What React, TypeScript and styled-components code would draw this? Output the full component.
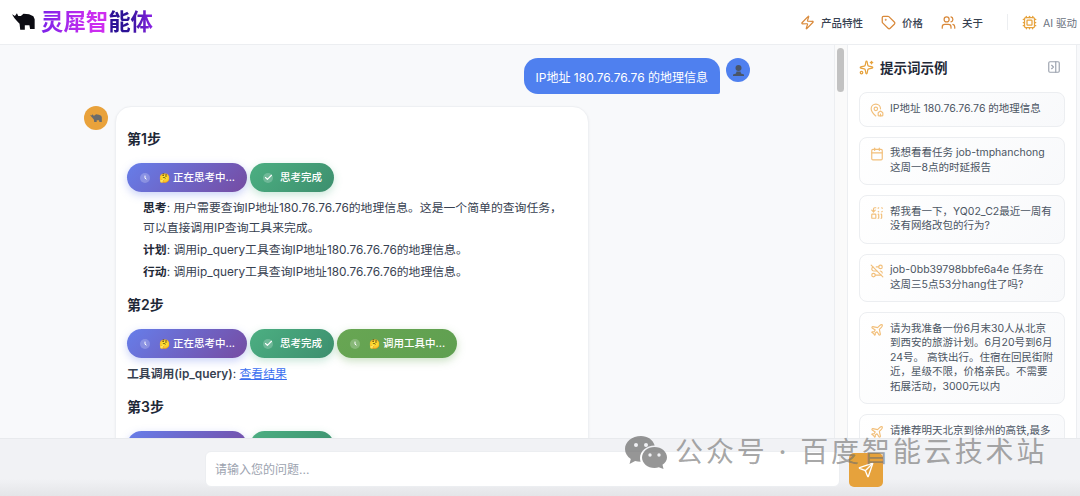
import { Calendar, Check, Cpu, MapPinHouse, PanelRightClose, Plane, ReplaceAll, RouteOff, Send, Sparkles, Tag, Users, Zap } from 'lucide-react'
import type { ReactNode } from 'react'
import styled, { createGlobalStyle } from 'styled-components'

const prompts: { icon: ReactNode; text: string }[] = [
  { icon: <MapPinHouse size={14} />, text: 'IP地址 180.76.76.76 的地理信息' },
  { icon: <Calendar size={14} />, text: '我想看看任务 job-tmphanchong 这周一8点的时延报告' },
  { icon: <ReplaceAll size={14} />, text: '帮我看一下，YQ02_C2最近一周有没有网络改包的行为?' },
  { icon: <RouteOff size={14} />, text: 'job-0bb39798bbfe6a4e 任务在这周三5点53分hang住了吗?' },
  { icon: <Plane size={14} />, text: '请为我准备一份6月末30人从北京到西安的旅游计划。6月20号到6月24号。 高铁出行。住宿在回民街附近，星级不限，价格亲民。不需要拓展活动，3000元以内' },
  { icon: <Plane size={14} />, text: '请推荐明天北京到徐州的高铁,最多不超过两个选项' },
]

const GlobalStyle = createGlobalStyle`
  html, body {
    margin: 0;
    height: 100%;
    overflow: hidden;
  }
  body {
    font-family: Inter, "Noto Sans CJK SC", sans-serif;
    color: #1f2937;
    background: #f8f9fb;
  }
`

const Page = styled.div`
  position: relative;
  display: flex;
  flex-direction: column;
  height: 496px;
  overflow: hidden;
`

const Header = styled.header`
  display: flex;
  flex: none;
  align-items: center;
  justify-content: space-between;
  height: 44px;
  padding: 0 3px 0 12px;
  background: #fff;
  border-bottom: 1px solid #eceef1;
`

const Brand = styled.div`
  display: flex;
  align-items: center;
  gap: 6px;
`

const BrandName = styled.span`
  font-size: 22.4px;
  font-weight: 700;
  line-height: 30px;
  background: linear-gradient(90deg, #7b22e8 0%, #c82cf0 42%, #d02ef0 58%, #2c1296 63%, #2c1296 78%, #8d22e6 100%);
  -webkit-background-clip: text;
  background-clip: text;
  color: transparent;
`

const Nav = styled.nav`
  display: flex;
  align-items: center;
  font-size: 10.5px;
  color: #374151;
`

const NavItem = styled.span`
  display: flex;
  align-items: center;
  gap: 6px;
  margin-left: 18px;
  font-weight: 500;
  svg {
    color: #d9893a;
  }
`

const NavNote = styled(NavItem)`
  margin-left: 24px;
  padding-left: 14px;
  border-left: 1px solid #eceef1;
  height: 16px;
  font-weight: 400;
  color: #6b7280;
  svg {
    color: #e6a23c;
  }
`

const Body = styled.main`
  display: flex;
  flex: 1;
  min-height: 0;
`

const Chat = styled.section`
  flex: 1;
  min-width: 0;
  padding: 13px 0 0 84px;
  overflow: hidden;
`

const UserRow = styled.div`
  display: flex;
  justify-content: flex-end;
  align-items: flex-start;
  gap: 6px;
  padding-right: 84px;
  margin-bottom: 12px;
`

const UserBubble = styled.div`
  display: flex;
  align-items: center;
  height: 36px;
  padding: 0 12px;
  background: #4f80ef;
  color: #fff;
  font-size: 12px;
  border-radius: 14px 14px 2px 14px;
`

const Avatar = styled.div<{ $bg: string }>`
  display: flex;
  flex: none;
  align-items: center;
  justify-content: center;
  width: 24px;
  height: 24px;
  border-radius: 50%;
  background: ${p => p.$bg};
`

const BotRow = styled.div`
  display: flex;
  align-items: flex-start;
  gap: 7px;
`

const BotBubble = styled.article`
  box-sizing: border-box;
  width: 474px;
  padding: 22px 12px 0 11px;
  background: #fff;
  border: 1px solid #eef0f3;
  border-radius: 16px 16px 0 0;
  box-shadow: 0 1px 3px rgba(0, 0, 0, 0.05);
  font-size: 11.85px;
  line-height: 19.5px;
`

const StepTitle = styled.h3`
  margin: 0 0 14px;
  font-size: 14px;
  font-weight: 600;
  line-height: 20px;
`

const Badges = styled.div`
  display: flex;
  gap: 3px;
  margin-bottom: 7px;
`

const Badge = styled.span<{ $tone: 'purple' | 'teal' | 'green' }>`
  display: flex;
  align-items: center;
  height: 29px;
  padding: 0 12px 0 13px;
  border-radius: 15px;
  color: #fff;
  font-size: 10.5px;
  font-weight: 500;
  white-space: nowrap;
  background: ${p =>
    p.$tone === 'purple'
      ? 'linear-gradient(135deg, #667eea, #764ba2)'
      : p.$tone === 'teal'
        ? 'linear-gradient(135deg, #4caf82, #3d8f6e)'
        : 'linear-gradient(135deg, #68a653, #5f9f50)'};
  box-shadow: 0 3px 8px
    ${p =>
      p.$tone === 'purple'
        ? 'rgba(102, 126, 234, 0.35)'
        : p.$tone === 'teal'
          ? 'rgba(76, 175, 130, 0.3)'
          : 'rgba(104, 166, 83, 0.35)'};
`

const BadgeIcon = styled.span`
  display: flex;
  align-items: center;
  justify-content: center;
  width: 10px;
  height: 10px;
  margin-right: 7px;
  border-radius: 50%;
  background: rgba(255, 255, 255, 0.22);
`

const Emoji = styled.span`
  margin: 0 3px 0 2px;
  font-size: 9px;
`

const Thought = styled.div`
  margin-bottom: 13px;
  padding: 0 12px 0 16px;
`

const ThoughtLine = styled.p`
  margin: 0 0 2.5px;
  color: #374151;
  strong {
    color: #1f2937;
    font-weight: 600;
  }
`

const ToolLine = styled.p`
  margin: 0;
  color: #374151;
  strong {
    font-weight: 600;
  }
  a {
    color: #3b6ff0;
  }
`

const StepBlock = styled.div`
  margin-bottom: 12.5px;
`

const ScrollTrack = styled.div`
  flex: none;
  box-sizing: border-box;
  width: 13px;
  padding: 3px 2px 0;
  background: #fafafa;
  border-left: 1px solid #eceef1;
`

const ScrollThumb = styled.div`
  width: 7px;
  height: 44px;
  border-radius: 3.5px;
  background: #c2c2c2;
`

const Sidebar = styled.aside`
  flex: none;
  width: 230px;
  margin-right: 3px;
  padding: 12px 11px 0;
  background: #fff;
  border-left: 1px solid #eceef1;
  border-right: 1px solid #eceef1;
  box-sizing: border-box;
  overflow: hidden;
`

const SideHead = styled.div`
  display: flex;
  align-items: center;
  justify-content: space-between;
  height: 20px;
  margin-bottom: 15px;
  padding-right: 4px;
  color: #9ca3af;
`

const SideTitle = styled.h2`
  display: flex;
  align-items: center;
  gap: 6px;
  margin: 0;
  font-size: 13.5px;
  font-weight: 600;
  color: #1f2937;
  svg {
    color: #e6a23c;
  }
`

const PromptCard = styled.div`
  display: flex;
  gap: 6px;
  margin-bottom: 10px;
  padding: 8.75px 10px;
  background: linear-gradient(135deg, #fff, #f8f9fb);
  border: 1px solid #eceef1;
  border-radius: 8px;
  font-size: 10.5px;
  line-height: 14.5px;
  color: #4b5563;
  svg {
    flex: none;
    color: #f2bf7a;
    margin-top: 1px;
  }
`

const Footer = styled.footer`
  position: absolute;
  left: 0;
  right: 0;
  bottom: 0;
  display: flex;
  align-items: flex-end;
  gap: 9px;
  height: 58px;
  padding: 0 197px 9px 205px;
  box-sizing: border-box;
  background: linear-gradient(180deg, #f1f2f5 0%, #f1f2f5 70%, #e4e5e8 100%);
  border-top: 1px solid #e8eaed;
`

const Input = styled.input`
  flex: 1;
  min-width: 0;
  height: 36px;
  padding: 0 9px;
  box-sizing: border-box;
  border: 1px solid #eceef1;
  border-radius: 6px;
  background: #fff;
  font: inherit;
  font-size: 12px;
  &::placeholder {
    color: #9ca3af;
  }
`

const SendButton = styled.button`
  display: flex;
  flex: none;
  align-items: center;
  justify-content: center;
  width: 34px;
  height: 34px;
  padding: 0;
  border: 0;
  border-radius: 5px;
  background: #e6a23c;
  color: #fff;
`

const Watermark = styled.div`
  position: absolute;
  left: 625px;
  top: 433px;
  display: flex;
  align-items: center;
  gap: 8px;
  font-size: 28px;
  line-height: 38px;
  letter-spacing: 2.9px;
  color: rgba(110, 110, 110, 0.62);
  white-space: nowrap;
  pointer-events: none;
`

const Rhino = ({ width, color }: { width: number; color: string }) => (
  <svg width={width} height={(width * 52) / 70} viewBox="33 43 70 52" fill={color}>
    <path d="M33 47 L42 52 L48 44 L52 52 L60 52 L68 45 L85 47 L98 53 L102 62 L102 92 L88 92 L86 80 L72 80 L72 94 L58 94 L56 76 L48 67 L40 58 Z" />
  </svg>
)

const Bust = () => (
  <svg width="13" height="13" viewBox="0 0 13 13" fill="#4a5568">
    <circle cx="6.5" cy="4" r="3" />
    <path d="M4.500 7.500h4l.5 2 3 1v1.500H1V10.500l3-1z" />
  </svg>
)

const ClockHands = () => (
  <svg width="10" height="10" viewBox="0 0 10 10" fill="none" stroke="#fff" strokeWidth="1" strokeLinecap="round">
    <path d="M5 3v2.200l1.200.8" />
  </svg>
)

const Step = ({ title, extra, children }: { title: string; extra?: boolean; children?: ReactNode }) => (
  <StepBlock>
    <StepTitle>{title}</StepTitle>
    <Badges>
      <Badge $tone="purple">
        <BadgeIcon><ClockHands /></BadgeIcon>
        <Emoji>🤔</Emoji>正在思考中...
      </Badge>
      <Badge $tone="teal">
        <BadgeIcon><Check size={9} strokeWidth={3} /></BadgeIcon>思考完成
      </Badge>
      {extra && (
        <Badge $tone="green">
          <BadgeIcon><ClockHands /></BadgeIcon>
          <Emoji>🤔</Emoji>调用工具中...
        </Badge>
      )}
    </Badges>
    {children}
  </StepBlock>
)

const App = () => {
  return (
    <Page>
      <GlobalStyle />
      <Header>
        <Brand>
          <Rhino width={23} color="#0b0b12" />
          <BrandName>灵犀智能体</BrandName>
        </Brand>
        <Nav>
          <NavItem><Zap size={15} />产品特性</NavItem>
          <NavItem><Tag size={15} />价格</NavItem>
          <NavItem><Users size={15} />关于</NavItem>
          <NavNote><Cpu size={15} />AI 驱动</NavNote>
        </Nav>
      </Header>
      <Body>
        <Chat>
          <UserRow>
            <UserBubble>IP地址 180.76.76.76 的地理信息</UserBubble>
            <Avatar $bg="#4f80ef">
              <Bust />
            </Avatar>
          </UserRow>
          <BotRow>
            <Avatar $bg="#e9a23b">
              <Rhino width={12} color="#6b6b6b" />
            </Avatar>
            <BotBubble>
              <Step title="第1步">
                <Thought>
                  <ThoughtLine><strong>思考</strong>: 用户需要查询IP地址180.76.76.76的地理信息。这是一个简单的查询任务，可以直接调用IP查询工具来完成。</ThoughtLine>
                  <ThoughtLine><strong>计划</strong>: 调用ip_query工具查询IP地址180.76.76.76的地理信息。</ThoughtLine>
                  <ThoughtLine><strong>行动</strong>: 调用ip_query工具查询IP地址180.76.76.76的地理信息。</ThoughtLine>
                </Thought>
              </Step>
              <Step title="第2步" extra>
                <ToolLine><strong>工具调用(ip_query)</strong>: <a href="#result">查看结果</a></ToolLine>
              </Step>
              <Step title="第3步" />
            </BotBubble>
          </BotRow>
        </Chat>
        <ScrollTrack>
          <ScrollThumb />
        </ScrollTrack>
        <Sidebar>
          <SideHead>
            <SideTitle><Sparkles size={15} />提示词示例</SideTitle>
            <PanelRightClose size={14} />
          </SideHead>
          {prompts.map((item, index) => (
            <PromptCard key={index}>
              {item.icon}
              <span>{item.text}</span>
            </PromptCard>
          ))}
        </Sidebar>
      </Body>
      <Footer>
        <Input placeholder="请输入您的问题..." />
        <SendButton><Send size={16} /></SendButton>
      </Footer>
      <Watermark>
        <svg width="42" height="34" viewBox="0 0 42 34" fill="rgba(110,110,110,.72)">
          <path d="M16 1C7 1 0 6.800 0 14c0 4 2.200 7.500 5.800 10L4.500 29l5.600-3c1.700.5 3.600.8 5.500.8-.4-1.300-.6-2.500-.6-3.800 0-7 6.400-12.600 14.700-12.600C28 4.800 22.500 1 16 1z" />
          <path d="M29.500 12C22.500 12 17 16.700 17 22.500S22.500 33 29.500 33c1.500 0 3-.2 4.300-.7L38.500 34l-1-4.200c2.800-1.900 4.500-4.400 4.500-7.300C42 16.700 36.500 12 29.500 12z" />
          <g fill="#f0f1f4">
            <circle cx="11" cy="10" r="2" />
            <circle cx="21" cy="10" r="2" />
            <circle cx="25" cy="20" r="1.700" />
            <circle cx="34" cy="20" r="1.700" />
          </g>
        </svg>
        公众号 · 百度智能云技术站
      </Watermark>
    </Page>
  )
}

export default App
